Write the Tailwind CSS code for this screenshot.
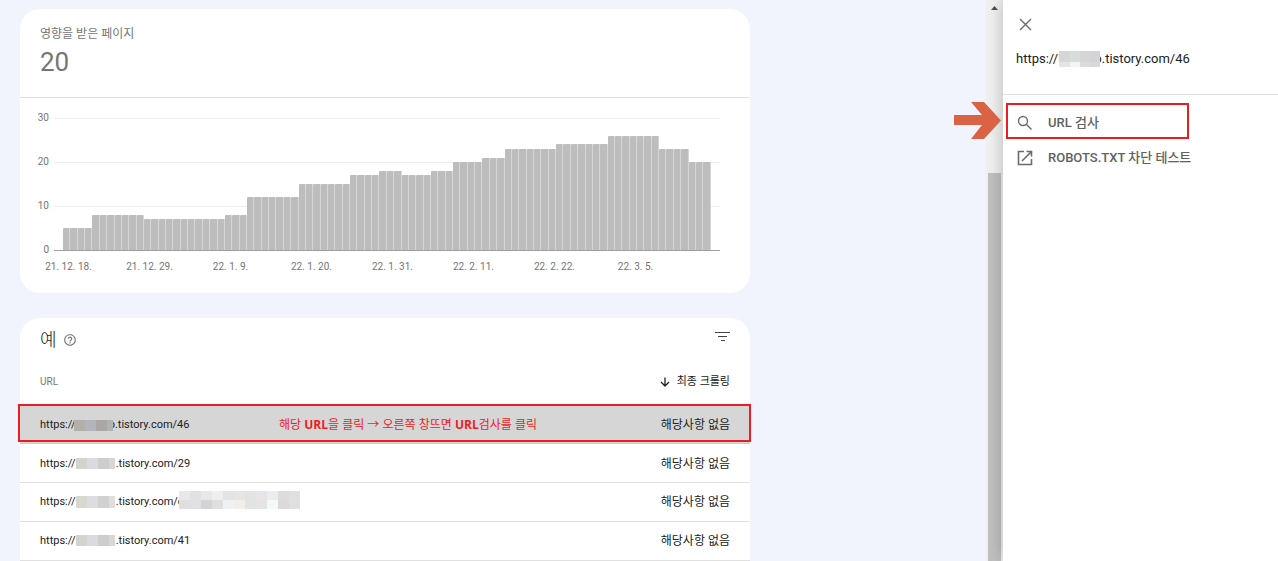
<!DOCTYPE html>
<html lang="ko">
<head>
    <meta charset="UTF-8">
    <meta name="viewport" content="width=device-width, initial-scale=1.0">
    <title>영향을 받은 페이지</title>
    <script src="https://cdn.jsdelivr.net/npm/@tailwindcss/browser@4"></script>
</head>

<body class="h-screen flex overflow-hidden bg-[#f1f4fd] font-[Roboto,'Noto_Sans_CJK_KR',sans-serif] text-[#212121]">

    <!-- Main content -->
    <main class="flex-1 min-w-0 h-screen overflow-hidden pl-5 pt-[9px]">

        <!-- Chart card -->
        <section class="w-full max-w-[730px] bg-white rounded-[20px] mb-[25px]">
            <div class="h-[89px] px-5 pt-4 border-b border-[#e0e0e0] text-[#757575]">
                <h2 class="text-[12px] leading-[18px]">영향을 받은 페이지</h2>
                <p class="text-[26px] leading-[38px]">20</p>
            </div>

            <div class="h-[195px] pt-5 pr-[30px]">
                <div class="flex">
                    <!-- Y axis -->
                    <div class="w-[29px] mr-[5px] -my-[22px] text-right text-[10px] leading-[44px] text-[#757575]">
                        <p>30</p>
                        <p>20</p>
                        <p>10</p>
                        <p>0</p>
                    </div>
                    <!-- Plot -->
                    <div class="flex-1 grid h-[133px]">
                        <div class="col-start-1 row-start-1">
                            <div class="h-11 border-t border-[#eeeeee]"></div>
                            <div class="h-11 border-t border-[#eeeeee]"></div>
                            <div class="h-11 border-t border-[#eeeeee]"></div>
                        </div>
                        <div id="bars" class="col-start-1 row-start-1 flex items-end px-[9px] border-b border-[#9e9e9e]"></div>
                    </div>
                </div>
                <!-- X axis -->
                <div class="pl-2 pr-11 mt-[9px] grid grid-cols-8 text-center text-[10px] leading-[14px] text-[#757575]">
                    <span>21. 12. 18.</span>
                    <span>21. 12. 29.</span>
                    <span>22. 1. 9.</span>
                    <span>22. 1. 20.</span>
                    <span>22. 1. 31.</span>
                    <span>22. 2. 11.</span>
                    <span>22. 2. 22.</span>
                    <span>22. 3. 5.</span>
                </div>
            </div>
        </section>

        <!-- Examples card -->
        <section class="w-full max-w-[730px] bg-white rounded-t-[20px]">
            <div class="h-[43px] px-5 flex items-center">
                <h2 class="text-[18px] leading-6 font-light">예</h2>
                <button aria-label="도움말" class="ml-1.5">
                    <svg class="w-[14px] h-[14px]" viewBox="0 0 24 24" fill="#757575">
                        <path d="M11 18h2v-2h-2v2zm1-16C6.48 2 2 6.48 2 12s4.480 10 10 10 10-4.480 10-10S17.520 2 12 2zm0 18c-4.410 0-8-3.590-8-8s3.590-8 8-8 8 3.590 8 8-3.590 8-8 8zm0-14c-2.210 0-4 1.790-4 4h2c0-1.100.9-2 2-2s2 .9 2 2c0 2-3 1.750-3 5h2c0-2.250 3-2.500 3-5 0-2.210-1.790-4-4-4z"/>
                    </svg>
                </button>
                <button aria-label="필터" class="ml-auto pb-1.5">
                    <svg class="block w-[15px] h-[10px]" viewBox="0 0 15 10" fill="#424242">
                        <path d="M0 0h15v1H0zM3 4h9v1H3zM6 8h4v1H6z"/>
                    </svg>
                </button>
            </div>

            <table class="w-full border-collapse">
                <thead>
                    <tr class="h-[43px] text-[10px] leading-[14px]">
                        <th scope="col" class="px-5 pb-0.5 text-left font-normal text-[#757575]">URL</th>
                        <th scope="col" class="px-5 pb-0.5 text-right text-[11px] font-normal">
                            <svg class="inline w-[10px] h-[10px] mr-1" viewBox="0 0 10 10" fill="none" stroke="#212121" stroke-width="1.300">
                                <path d="M5 .5v8.500M1 5l4 4 4-4"/>
                            </svg>
                            최종 크롤링
                        </th>
                    </tr>
                </thead>
                <tbody class="text-[11px] leading-[14px]">
                    <tr class="relative h-[39px] bg-[#d6d6d6] border-b border-[#cccccc]">
                        <td class="px-5 pt-1">
                            <div class="flex items-center">
                                <span>https://</span>
                                <span class="z-10 -ml-0.5 flex h-[11px]">
                                    <i class="w-[11px] bg-[#b3b0aa]"></i><i class="w-[11px] bg-[#b4b5bc]"></i><i class="w-[11px] bg-[#aca6a4]"></i><i class="w-[6px] bg-[#b2b3b3]"></i>
                                </span>
                                <span class="-ml-1">o.tistory.com/46</span>
                            </div>
                            <!-- Highlight and note -->
                            <div class="absolute -left-0.5 -right-px top-0 bottom-0 border-2 border-[#ed1c24] flex items-center">
                                <p class="pl-[259px] pt-1 text-[12px] leading-4 font-['Open_Sans','Noto_Sans_CJK_KR',sans-serif] text-[#ed1c24]">해당 <b>URL</b>을 클릭 → 오른쪽 창뜨면 <b>URL</b>검사를 클릭</p>
                            </div>
                        </td>
                        <td class="px-5 pt-1 text-right text-[12px]">해당사항 없음</td>
                    </tr>
                    <tr class="h-[39px] border-b border-[#e0e0e0]">
                        <td class="px-5 pt-0.5">
                            <div class="flex items-center">
                                <span>https://</span>
                                <span class="mr-px flex h-[11px]">
                                    <i class="w-[11px] bg-[#d4d3cd]"></i><i class="w-[11px] bg-[#dadae0]"></i><i class="w-[11px] bg-[#cdcdcd]"></i><i class="w-[6px] bg-[#d7d7d7]"></i>
                                </span>
                                <span>.tistory.com/29</span>
                            </div>
                        </td>
                        <td class="px-5 pt-0.5 text-right text-[12px]">해당사항 없음</td>
                    </tr>
                    <tr class="h-[39px] border-b border-[#e0e0e0]">
                        <td class="px-5">
                            <div class="flex items-center h-[14px]">
                                <span>https://</span>
                                <span class="mr-px flex h-[12px]">
                                    <i class="w-[11px] bg-[#d8d8d1]"></i><i class="w-[11px] bg-[#dcdce2]"></i><i class="w-[11px] bg-[#d1d1d1]"></i><i class="w-[6px] bg-[#dedede]"></i>
                                </span>
                                <span>.tistory.com/e</span>
                                <span class="z-10 -ml-[5px] mb-1 grid shrink-0 grid-cols-11 w-[121px] h-[18px]">
                                    <i class="bg-[#e7e9e8]"></i><i class="bg-[#e1e0e2]"></i><i class="bg-[#e8e8e8]"></i><i class="bg-[#eeeeee]"></i><i class="bg-[#e2e3e5]"></i><i class="bg-[#e9e4e1]"></i><i class="bg-[#e2e3e3]"></i><i class="bg-[#e7e3e9]"></i><i class="bg-[#ebedec]"></i><i class="bg-[#dcdcdb]"></i><i class="bg-[#dfdfdf]"></i>
                                    <i class="bg-[#dedfe1]"></i><i class="bg-[#e3e0e3]"></i><i class="bg-[#d3d4d6]"></i><i class="bg-[#dfdfdf]"></i><i class="bg-[#f0f1f4]"></i><i class="bg-[#f2eee9]"></i><i class="bg-[#e1e4e3]"></i><i class="bg-[#e4e4e5]"></i><i class="bg-[#f5f8f9]"></i><i class="bg-[#dadad9]"></i><i class="bg-[#e0e0e0]"></i>
                                </span>
                            </div>
                        </td>
                        <td class="px-5 text-right text-[12px]">해당사항 없음</td>
                    </tr>
                    <tr class="h-[39px] border-b border-[#e0e0e0]">
                        <td class="px-5">
                            <div class="flex items-center">
                                <span>https://</span>
                                <span class="mr-px flex h-[11px]">
                                    <i class="w-[11px] bg-[#d4d3cd]"></i><i class="w-[11px] bg-[#dadae0]"></i><i class="w-[11px] bg-[#cdcdcd]"></i><i class="w-[6px] bg-[#d7d7d7]"></i>
                                </span>
                                <span>.tistory.com/41</span>
                            </div>
                        </td>
                        <td class="px-5 text-right text-[12px]">해당사항 없음</td>
                    </tr>
                </tbody>
            </table>
        </section>
    </main>

    <!-- Scrollbar -->
    <div class="w-[17px] h-screen flex flex-col items-center bg-[#f1f1f1]">
        <svg class="w-[7px] h-[4px] mt-[6px] mb-[163px]" viewBox="0 0 7 4" fill="#505050">
            <path d="M0 4L3.500 0 7 4z"/>
        </svg>
        <div class="w-[13px] flex-1 bg-[#c1c1c1]"></div>
    </div>

    <!-- Side panel -->
    <aside class="relative w-[275px] h-screen bg-white shadow-[0_0_16px_rgba(0,0,0,0.25)]">
        <div class="h-[95px] pl-[13px] pt-[18px] border-b border-[#e0e0e0]">
            <button aria-label="닫기" class="block ml-[3px]">
                <svg class="w-[13px] h-[13px]" viewBox="0 0 13 13" fill="none" stroke="#6b6b6b" stroke-width="1.400">
                    <path d="M1 1l11 11M12 1L1 12"/>
                </svg>
            </button>
            <div class="mt-[18px] flex items-center text-[13px] leading-5">
                <span>https://l</span>
                <span class="z-10 -ml-0.5 grid grid-cols-4 w-[41px] h-4">
                    <i class="bg-[#d5d6d6] h-[11px]"></i><i class="bg-[#d8dcdb] h-[11px]"></i><i class="bg-[#d4d5d8] h-[11px]"></i><i class="bg-[#d3d3d3] h-[11px]"></i>
                    <i class="bg-[#e8e4e4] h-[5px]"></i><i class="bg-[#f3f4f6] h-[5px]"></i><i class="bg-[#dedad9] h-[5px]"></i><i class="bg-[#d6d8da] h-[5px]"></i>
                </span>
                <span class="-ml-1.5">o.tistory.com/46</span>
            </div>
        </div>

        <nav class="pt-[10px] text-[13px] font-medium text-[#616161]">
            <button class="w-full h-[35px] pl-[14px] flex items-center">
                <svg class="w-4 h-4 mr-[15px]" viewBox="0 0 16 16" fill="none" stroke="#6b6b6b" stroke-width="1.400">
                    <circle cx="6" cy="6" r="4.500"/>
                    <path d="M9.300 9.300l5.200 5.200"/>
                </svg>
                URL 검사
            </button>
            <a href="#" class="w-full h-[35px] pl-[14px] flex items-center">
                <svg class="w-4 h-4 mr-[15px]" viewBox="0 0 16 16" fill="none" stroke="#6b6b6b" stroke-width="1.600">
                    <path d="M7 1.500H1.500v13h13V9M9.500 1.500h5v5M14.500 1.500L5 11"/>
                </svg>
                ROBOTS.TXT 차단 테스트
            </a>
        </nav>

        <!-- Highlight and arrow over the first entry -->
        <div class="absolute left-[3px] top-[103px] w-[183px] h-[36px] border-2 border-[#ed1c24]"></div>
        <svg class="absolute -left-[49px] top-[102px] w-[47px] h-[37px]" viewBox="0 0 47 37" fill="#d96344">
            <path d="M0 13h28L17 0h13l17 18.500L30 37H17l11-14H0z"/>
        </svg>
    </aside>

    <script>
        // [pages, days]
        const runs = [[5, 4], [8, 7], [7, 11], [8, 3], [12, 7], [15, 7], [17, 4], [18, 3], [17, 4], [18, 3], [20, 4], [21, 3], [23, 7], [24, 7], [26, 7], [23, 4], [20, 3]];
        const bars = document.getElementById('bars');

        runs.forEach(([pages, days]) => {
            for (let i = 0; i < days; i++) {
                const bar = document.createElement('div');
                bar.className = 'flex-1 rounded-t-[1px] bg-[#bdbdbd] border-r border-[#d6d6d6]';
                bar.style.height = pages / 30 * 100 + '%';
                bars.appendChild(bar);
            }
        });
    </script>
</body>
</html>
